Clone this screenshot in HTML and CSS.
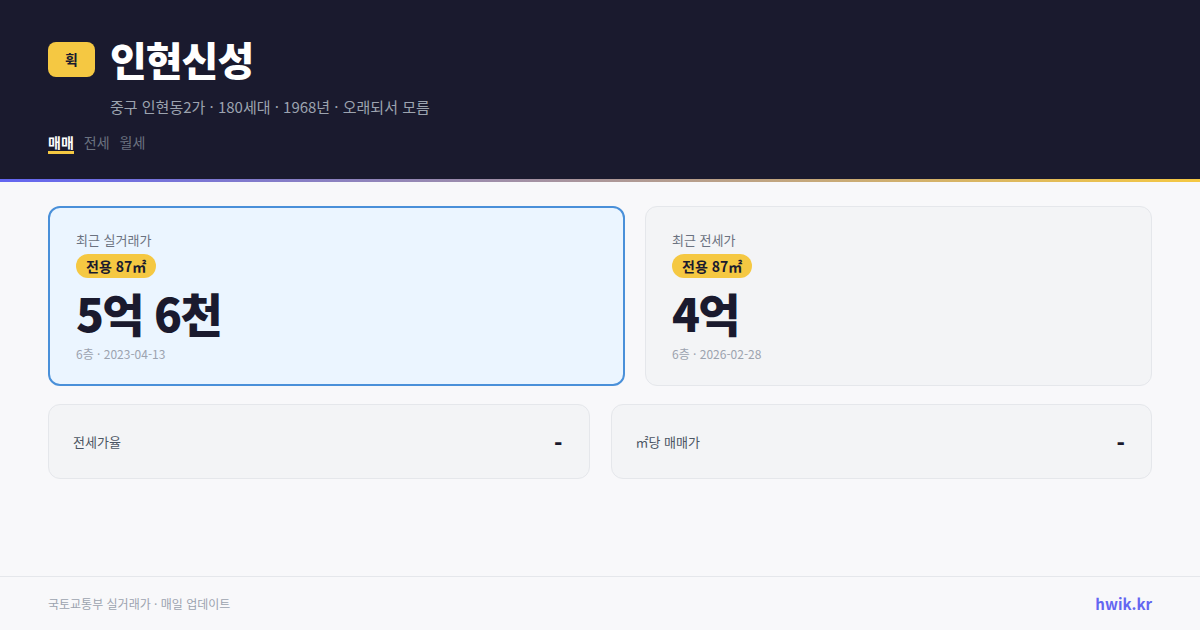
FILE: index.html
```html
<!DOCTYPE html>
<html lang="ko">
<head>
<meta charset="utf-8">
<link rel="stylesheet" href="styles.css">
</head>
<body>
<div class="page">
  <header class="hero">
    <div class="title-row">
      <div class="logo">휙</div>
      <h1 class="title">인현신성</h1>
    </div>
    <p class="subtitle">중구 인현동2가 · 180세대 · 1968년 · 오래되서 모름</p>
    <nav class="tabs">
      <span class="tab active">매매</span>
      <span class="tab">전세</span>
      <span class="tab">월세</span>
    </nav>
  </header>
  <main class="main">
    <div class="row-top">
      <section class="card card-primary">
        <div class="card-label">최근 실거래가</div>
        <span class="badge">전용 87㎡</span>
        <div class="price">5억 6천</div>
        <div class="meta">6층 · 2023-04-13</div>
      </section>
      <section class="card">
        <div class="card-label">최근 전세가</div>
        <span class="badge">전용 87㎡</span>
        <div class="price">4억</div>
        <div class="meta">6층 · 2026-02-28</div>
      </section>
    </div>
    <div class="row-bottom">
      <section class="stat">
        <span class="stat-label">전세가율</span>
        <span class="stat-value">-</span>
      </section>
      <section class="stat">
        <span class="stat-label">㎡당 매매가</span>
        <span class="stat-value">-</span>
      </section>
    </div>
  </main>
  <footer class="footer">
    <span class="footer-note">국토교통부 실거래가 · 매일 업데이트</span>
    <span class="footer-brand">hwik.kr</span>
  </footer>
</div>
</body>
</html>
```
FILE: styles.css
```css
* { box-sizing: border-box; }
html, body { margin: 0; padding: 0; }
body {
  width: 1200px;
  height: 630px;
  overflow: hidden;
  font-family: "Noto Sans CJK KR", "Noto Sans", sans-serif;
  background: #f8f8fa;
  color: #1a1a2e;
}
.page {
  display: flex;
  flex-direction: column;
  height: 630px;
}
.hero {
  background: #1a1a2e;
  padding: 36px 48px 25px;
  border-bottom: 3px solid transparent;
  border-image: linear-gradient(90deg, #6366f1, #f5c842) 1;
}
.title-row {
  display: flex;
  align-items: center;
  gap: 15px;
  height: 46px;
}
.logo {
  width: 47px;
  height: 35px;
  border-radius: 8px;
  background: #f5c842;
  color: #1a1a2e;
  font-size: 14px;
  font-weight: 700;
  display: flex;
  align-items: center;
  justify-content: center;
}
.title {
  margin: 0;
  font-size: 40px;
  font-weight: 800;
  color: #ffffff;
  line-height: 46px;
  letter-spacing: -1px;
}
.subtitle {
  margin: 14px 0 0 62px;
  font-size: 15px;
  line-height: 21px;
  color: #9ca3af;
}
.tabs {
  display: flex;
  gap: 10px;
  margin-top: 16px;
}
.tab {
  font-size: 14px;
  line-height: 18px;
  color: #6b7280;
  border-bottom: 3px solid transparent;
}
.tab.active {
  color: #ffffff;
  font-weight: 700;
  border-bottom-color: #f5c842;
}
.main {
  flex: 1;
  padding: 24px 48px 0;
  display: flex;
  flex-direction: column;
  gap: 18px;
}
.row-top {
  display: grid;
  grid-template-columns: 577fr 507fr;
  gap: 20px;
}
.card {
  background: #f3f4f6;
  border: 1px solid #e5e7eb;
  border-radius: 12px;
  padding: 23px 26px 22px;
  height: 180px;
  display: flex;
  flex-direction: column;
  align-items: flex-start;
}
.card-primary {
  background: #ebf5ff;
  border: 2px solid #4a90d9;
  padding: 22px 26px 21px;
}
.card-label {
  font-size: 13px;
  line-height: 19px;
  color: #6b7280;
}
.badge {
  margin-top: 5px;
  background: #f5c842;
  color: #1a1a2e;
  font-size: 14px;
  font-weight: 700;
  line-height: 24px;
  height: 24px;
  padding: 0 10px;
  border-radius: 12px;
}
.price {
  margin-top: 7px;
  font-size: 46px;
  font-weight: 800;
  line-height: 54px;
  letter-spacing: -1.7px;
  color: #1a1a2e;
}
.meta {
  margin-top: 6px;
  font-size: 12px;
  line-height: 17px;
  color: #9ca3af;
}
.row-bottom {
  display: grid;
  grid-template-columns: 1fr 1fr;
  gap: 21px;
}
.stat {
  height: 75px;
  background: #f3f4f6;
  border: 1px solid #e5e7eb;
  border-radius: 12px;
  padding: 0 26px 0 24px;
  display: flex;
  align-items: center;
  justify-content: space-between;
}
.stat-label {
  font-size: 13px;
  color: #4b5563;
}
.stat-value {
  font-size: 22px;
  font-weight: 800;
  color: #1a1a2e;
}
.footer {
  height: 54px;
  border-top: 1px solid #e5e7eb;
  padding: 0 48px;
  display: flex;
  align-items: center;
  justify-content: space-between;
}
.footer-note {
  font-size: 12px;
  color: #9ca3af;
}
.footer-brand {
  font-size: 15px;
  font-weight: 700;
  color: #6366f1;
}
```
